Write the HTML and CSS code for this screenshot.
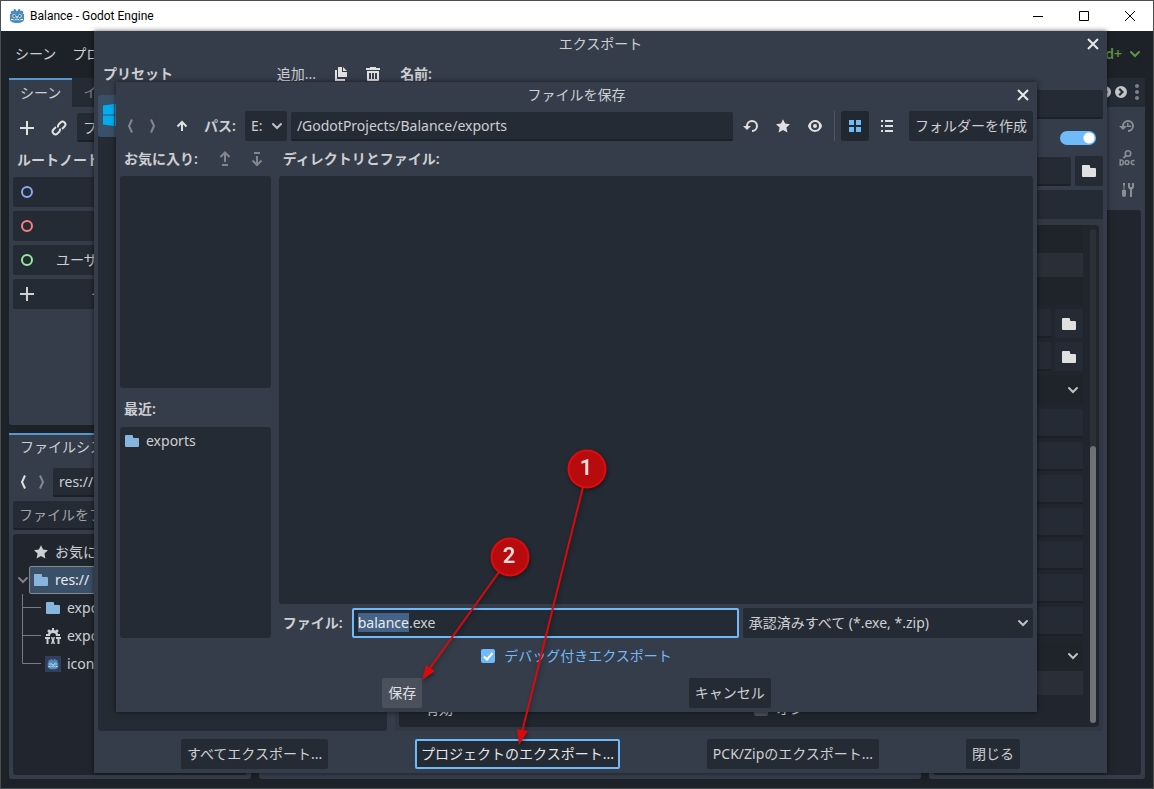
FILE: index.html
```html
<!DOCTYPE html>
<html lang="ja">

<head>
  <meta charset="UTF-8" />
  <meta name="viewport" content="width=device-width, initial-scale=1.0" />
  <title>Balance - Godot Engine</title>
  <link rel="stylesheet" href="styles.css">
</head>

<body>
  <!-- Icon set -->
  <svg class="icon-defs" aria-hidden="true">
    <symbol id="add" viewBox="0 0 16 16"><path d="M7 1v6H1v2h6v6h2V9h6V7H9V1z" /></symbol>
    <symbol id="folder" viewBox="0 0 16 16"><path d="M2 2a1 1 0 0 0-1 1v10a1 1 0 0 0 1 1h12a1 1 0 0 0 1-1V6a1 1 0 0 0-1-1h-4a1 1 0 0 1-1-1V3a1 1 0 0 0-1-1z" /></symbol>
    <symbol id="star" viewBox="0 0 16 16"><path d="M8 1.200l2.100 4.400 4.900.6-3.600 3.300 1 4.900L8 12l-4.400 2.400 1-4.900L1 6.200l4.900-.6z" /></symbol>
    <symbol id="link" viewBox="0 0 16 16"><g fill="none" stroke="currentColor" stroke-width="2" transform="rotate(-45 8 8)"><path d="M6.500 5.200H3a2.800 2.800 0 0 0 0 5.600h2.500a2.800 2.800 0 0 0 2.500-1.800" /><path d="M9.500 10.800H13a2.800 2.800 0 0 0 0-5.600h-2.500A2.800 2.800 0 0 0 8 7" /></g></symbol>
    <symbol id="ring" viewBox="0 0 16 16"><circle cx="8" cy="8" r="5" fill="none" stroke="currentColor" stroke-width="2" /></symbol>
    <symbol id="back" viewBox="0 0 16 16"><path d="M10 1.500L7 8l3 6.500" fill="none" stroke="currentColor" stroke-width="2" /></symbol>
    <symbol id="forward" viewBox="0 0 16 16"><path d="M6 1.500L9 8l-3 6.500" fill="none" stroke="currentColor" stroke-width="2" /></symbol>
    <symbol id="up" viewBox="0 0 16 16"><path d="M8 13V5M3.500 8.500L8 4l4.500 4.500" fill="none" stroke="currentColor" stroke-width="2" /></symbol>
    <symbol id="move-up" viewBox="0 0 16 16"><path d="M8 11V2M3.500 6L8 1.500 12.500 6M5 14h6" fill="none" stroke="currentColor" stroke-width="2" /></symbol>
    <symbol id="move-down" viewBox="0 0 16 16"><path d="M8 5v9M3.500 9.500L8 14l4.500-4.500M5 2h6" fill="none" stroke="currentColor" stroke-width="2" /></symbol>
    <symbol id="reload" viewBox="0 0 16 16"><path d="M9 2a6 6 0 0 0-6 6H0l4 4 4-4H5a4 4 0 1 1 4 4v2A6 6 0 0 0 9 2z" /></symbol>
    <symbol id="history" viewBox="0 0 16 16"><path d="M9 2a6 6 0 0 0-6 6H0l4 4 4-4H5a4 4 0 1 1 4 4v2A6 6 0 0 0 9 2zM8 5v4h4V7.500H9.500V5z" /></symbol>
    <symbol id="eye" viewBox="0 0 16 16"><path fill-rule="evenodd" d="M8 2C5.400 2 2.200 3.900 1 7.700v.6C2.200 12.200 5.500 14 8 14s5.800-1.800 7-5.700v-.6C13.900 3.900 10.600 2 8 2zm0 2a4 4 0 1 1 0 8 4 4 0 0 1 0-8zm0 2a2 2 0 1 0 0 4 2 2 0 0 0 0-4z" /></symbol>
    <symbol id="grid" viewBox="0 0 16 16"><path d="M2 2h5v5H2zM9 2h5v5H9zM2 9h5v5H2zM9 9h5v5H9z" /></symbol>
    <symbol id="list" viewBox="0 0 16 16"><path d="M2 2h2v2H2zM6 2h8v2H6zM2 7h2v2H2zM6 7h8v2H6zM2 12h2v2H2zM6 12h8v2H6z" /></symbol>
    <symbol id="close" viewBox="0 0 16 16"><path d="M3 3l10 10M13 3L3 13" fill="none" stroke="currentColor" stroke-width="2" /></symbol>
    <symbol id="chevron" viewBox="0 0 16 16"><path d="M4 6l4 4 4-4" fill="none" stroke="currentColor" stroke-width="2" stroke-linecap="round" /></symbol>
    <symbol id="duplicate" viewBox="0 0 16 16"><path d="M5 1v10h9V6H9V1zM10 1v4h4zM2 4v11h10v-2H4V4z" /></symbol>
    <symbol id="trash" viewBox="0 0 16 16"><path d="M5 1v1H1v2h14V2h-4V1zM2 5v9a1 1 0 0 0 1 1h10a1 1 0 0 0 1-1V5zm2 2h2v6H4zm3 0h2v6H7zm3 0h2v6h-2z" fill-rule="evenodd" /></symbol>
    <symbol id="next-circle" viewBox="0 0 16 16"><path fill-rule="evenodd" d="M8 2a6 6 0 1 0 0 12A6 6 0 0 0 8 2zM7 4l4 4-4 4-1.600-1.500L8 8 5.400 5.500z" /></symbol>
    <symbol id="dots" viewBox="0 0 16 16"><circle cx="8" cy="2" r="2" /><circle cx="8" cy="8" r="2" /><circle cx="8" cy="14" r="2" /></symbol>
    <symbol id="tools" viewBox="0 0 16 16"><path d="M4 1h2v2L5.500 4v4H7v5a2 2 0 0 1-4 0V8h1.500V4L4 3zM9 1v4a3 3 0 0 0 2 2.500V15h2V7.500A3 3 0 0 0 15 5V1h-2v4h-2V1z" /></symbol>
    <symbol id="doc" viewBox="0 0 16 16"><g fill="none" stroke="currentColor"><circle cx="9" cy="3.500" r="2.700" stroke-width="1.600" /><path d="M7 5.500L4.500 8" stroke-width="2" /><path d="M1.200 10v5h1a2 2 0 0 0 2-2.500 2 2 0 0 0-2-2.500z" stroke-width="1.500" /><circle cx="8" cy="12.500" r="1.900" stroke-width="1.500" /><path d="M15.500 10.500h-1.200a1.900 1.900 0 0 0 0 4h1.200" stroke-width="1.500" /></g></symbol>
    <symbol id="gear-txt" viewBox="0 0 16 16"><path fill-rule="evenodd" d="M7 0h2v2l1.500.6L12 1.200 13.800 3l-1.300 1.500L13 6h2v2h-4a3 3 0 0 0-6 0H1V6h2l.5-1.500L2.200 3 4 1.200l1.500 1.400L7 2z" /><path d="M0 9h5v2H3.500v5h-2v-5H0zM6 9h1.500L8 11l.5-2H10l-1 3.500 1 3.500H8.500L8 14l-.5 2H6l1-3.500zM11 9h5v2h-1.500v5h-2v-5H11z" /></symbol>
    <symbol id="godot" viewBox="0 0 16 16">
      <path d="M5 1l2 .5.3 1.500h1.400L9 1.500l2-.5.700 2.200 1.300-.7 1.500 1.500-.8 1.500 1.300.6v5.400c0 2-3 3.500-7 3.500s-7-1.500-7-3.500V6.100l1.300-.6-.8-1.500L3 2.500l1.300.7z" fill="#478cbf" />
      <circle cx="5" cy="8" r="1.700" fill="#fff" /><circle cx="11" cy="8" r="1.700" fill="#fff" />
      <circle cx="5.200" cy="8.100" r="1" fill="#414042" /><circle cx="10.800" cy="8.100" r="1" fill="#414042" />
      <path d="M7.400 8h1.200v2.200H7.400zM2 11h2.500v1.200H6V11h1.500v1.200h1V11H10v1.200h1.500V11H14v1H2z" fill="#fff" />
    </symbol>
  </svg>

  <header class="titlebar">
    <svg class="icon"><use href="#godot" /></svg>
    <span class="titlebar-text">Balance - Godot Engine</span>
    <button class="window-button" aria-label="最小化"><svg viewBox="0 0 12 12"><path d="M1 6.500h10" /></svg></button>
    <button class="window-button" aria-label="最大化"><svg viewBox="0 0 12 12"><path d="M1.500 1.500h9v9h-9z" /></svg></button>
    <button class="window-button" aria-label="終了"><svg viewBox="0 0 12 12"><path d="M1 1l10 10M11 1L1 11" /></svg></button>
  </header>

  <main class="editor">
    <nav class="menubar">
      <button class="menu">シーン</button>
      <button class="menu">プロ</button>
      <button class="renderer">d+ <svg class="icon"><use href="#chevron" /></svg></button>
    </nav>

    <div class="docks">
      <div class="dock-column">
        <!-- Scene dock -->
        <section class="dock scene-dock">
          <div class="tabs">
            <button class="tab active">シーン</button>
            <button class="tab">イ</button>
          </div>
          <div class="dock-body">
            <div class="row">
              <button class="tool" aria-label="追加"><svg class="icon"><use href="#add" /></svg></button>
              <button class="tool" aria-label="リンク"><svg class="icon"><use href="#link" /></svg></button>
              <input class="field grow" type="text" aria-label="フィルター" value="フ">
            </div>
            <h2 class="label root-label">ルートノード</h2>
            <button class="node-button"><svg class="icon node-2d"><use href="#ring" /></svg></button>
            <button class="node-button"><svg class="icon node-3d"><use href="#ring" /></svg></button>
            <button class="node-button"><svg class="icon node-ui"><use href="#ring" /></svg><span>ユーザ</span></button>
            <button class="node-button other"><svg class="icon"><use href="#add" /></svg><span>そ</span></button>
          </div>
        </section>

        <!-- FileSystem dock -->
        <section class="dock files-dock">
          <div class="tabs">
            <button class="tab active wide">ファイルシス</button>
          </div>
          <div class="dock-body">
            <div class="row nav-row">
              <button class="step" aria-label="戻る"><svg class="icon"><use href="#back" /></svg></button>
              <button class="step dim" aria-label="進む"><svg class="icon"><use href="#forward" /></svg></button>
              <input class="field grow" type="text" aria-label="パス" value="res://">
            </div>
            <input class="field filter" type="text" aria-label="検索" placeholder="ファイルをフ">
            <ul class="tree">
              <li class="tree-row"><svg class="icon indent"><use href="#star" /></svg>お気に</li>
              <li class="tree-row open">
                <svg class="icon arrow"><use href="#chevron" /></svg>
                <span class="selected"><svg class="icon blue"><use href="#folder" /></svg>res://</span>
              </li>
              <li class="tree-row child"><svg class="branch" viewBox="0 0 20 28"><path d="M.5 0v28M.5 13.500H19" /></svg><svg class="icon blue"><use href="#folder" /></svg>expo</li>
              <li class="tree-row child"><svg class="branch" viewBox="0 0 20 28"><path d="M.5 0v28M.5 13.500H19" /></svg><svg class="icon"><use href="#gear-txt" /></svg>expo</li>
              <li class="tree-row child"><svg class="branch" viewBox="0 0 20 28"><path d="M.5 0v13.500H19" /></svg><span class="thumb"><svg class="icon"><use href="#godot" /></svg></span>icon</li>
            </ul>
          </div>
        </section>
      </div>

      <section class="dock center-dock"></section>

      <!-- Inspector dock -->
      <section class="dock inspector-dock">
        <div class="inspector-tabs">
          <svg class="icon"><use href="#next-circle" /></svg>
          <svg class="icon"><use href="#next-circle" /></svg>
          <svg class="icon dots"><use href="#dots" /></svg>
        </div>
        <div class="inspector-tools">
          <button aria-label="履歴"><svg class="icon"><use href="#history" /></svg></button>
          <button aria-label="ドキュメント"><svg class="icon"><use href="#doc" /></svg></button>
          <button aria-label="ツール"><svg class="icon"><use href="#tools" /></svg></button>
        </div>
        <div class="inspector-list"></div>
      </section>
    </div>

    <!-- Export dialog -->
    <section class="dialog export-dialog">
      <header class="dialog-title">
        <h1>エクスポート</h1>
        <button class="close" aria-label="閉じる"><svg class="icon"><use href="#close" /></svg></button>
      </header>
      <div class="export-body">
        <div class="presets">
          <div class="row preset-head">
            <h2 class="label grow">プリセット</h2>
            <button class="flat">追加...</button>
            <button class="tool" aria-label="複製"><svg class="icon"><use href="#duplicate" /></svg></button>
            <button class="tool" aria-label="削除"><svg class="icon"><use href="#trash" /></svg></button>
          </div>
          <div class="panel preset-list">
            <div class="preset"><svg viewBox="0 0 24 24"><path d="M0 2.500L11 1v10.500H0zM12 .8L24 0v11.500H12zM0 12.500h11V23L0 21.500zM12 12.500h12V24l-12-1z" /></svg></div>
          </div>
        </div>
        <div class="options">
          <label class="label name-label" for="preset-name">名前:</label>
          <input class="field" id="preset-name" type="text">
          <div class="toggle-row"><input class="toggle" type="checkbox" aria-label="実行可能" checked></div>
          <div class="row">
            <input class="field grow" type="text" aria-label="エクスポート先のパス">
            <button class="button square" aria-label="参照"><svg class="icon"><use href="#folder" /></svg></button>
          </div>
          <div class="option-tabs"></div>
          <div class="option-frame">
            <div class="option-scroll">
              <div class="properties">
                <div class="group"></div>
                <div class="section"></div>
                <div class="group"></div>
                <div class="row"><input class="field grow" type="text" aria-label="デバッグ"><button class="button square" aria-label="開く"><svg class="icon"><use href="#folder" /></svg></button></div>
                <div class="row"><input class="field grow" type="text" aria-label="リリース"><button class="button square" aria-label="開く"><svg class="icon"><use href="#folder" /></svg></button></div>
                <select class="select dark" aria-label="ラッパー"></select>
                <input class="field" type="text" aria-label="項目 1">
                <input class="field" type="text" aria-label="項目 2">
                <input class="field" type="text" aria-label="項目 3">
                <input class="field" type="text" aria-label="項目 4">
                <input class="field" type="text" aria-label="項目 5">
                <input class="field" type="text" aria-label="項目 6">
                <input class="field" type="text" aria-label="項目 7">
                <select class="select dark last" aria-label="アーキテクチャ"></select>
                <div class="section"></div>
                <div class="enabled-row">
                  <span>有効</span>
                  <label><input class="check off" type="checkbox">オン</label>
                </div>
              </div>
              <div class="scrollbar"><div class="track"><div class="grabber"></div></div></div>
            </div>
          </div>
        </div>
      </div>
      <footer class="dialog-actions">
        <button class="button">すべてエクスポート...</button>
        <button class="button focused">プロジェクトのエクスポート...</button>
        <button class="button">PCK/Zipのエクスポート...</button>
        <button class="button">閉じる</button>
      </footer>
    </section>

    <!-- Save dialog -->
    <section class="dialog save-dialog">
      <header class="dialog-title">
        <h1>ファイルを保存</h1>
        <button class="close" aria-label="閉じる"><svg class="icon"><use href="#close" /></svg></button>
      </header>
      <div class="save-toolbar">
        <button class="step dim" aria-label="戻る"><svg class="icon"><use href="#back" /></svg></button>
        <button class="step dim" aria-label="進む"><svg class="icon"><use href="#forward" /></svg></button>
        <button class="tool" aria-label="上へ"><svg class="icon"><use href="#up" /></svg></button>
        <label class="label path-label" for="path">パス:</label>
        <select class="select drive" aria-label="ドライブ"><option>E:</option></select>
        <input class="field grow" id="path" type="text" value="/GodotProjects/Balance/exports">
        <button class="tool" aria-label="更新"><svg class="icon"><use href="#reload" /></svg></button>
        <button class="tool" aria-label="お気に入り"><svg class="icon"><use href="#star" /></svg></button>
        <button class="tool" aria-label="隠しファイル"><svg class="icon"><use href="#eye" /></svg></button>
        <span class="separator"></span>
        <button class="button square pressed" aria-label="サムネイル"><svg class="icon"><use href="#grid" /></svg></button>
        <button class="tool" aria-label="リスト"><svg class="icon"><use href="#list" /></svg></button>
        <button class="button create">フォルダーを作成</button>
      </div>
      <div class="save-body">
        <aside class="places">
          <div class="list-head">
            <h2 class="label grow">お気に入り:</h2>
            <button class="tool dim" aria-label="上に移動"><svg class="icon"><use href="#move-up" /></svg></button>
            <button class="tool dim" aria-label="下に移動"><svg class="icon"><use href="#move-down" /></svg></button>
          </div>
          <div class="panel"></div>
          <div class="list-head recent"><h2 class="label">最近:</h2></div>
          <ul class="panel">
            <li><svg class="icon blue"><use href="#folder" /></svg>exports</li>
          </ul>
        </aside>
        <div class="files">
          <div class="list-head"><h2 class="label">ディレクトリとファイル:</h2></div>
          <div class="panel"></div>
          <div class="file-row">
            <label class="label" for="file-name">ファイル:</label>
            <input class="field focused" id="file-name" type="text" value="balance.exe">
            <select class="select" aria-label="ファイルの種類"><option>承認済みすべて (*.exe, *.zip)</option></select>
          </div>
        </div>
      </div>
      <label class="debug-row"><input class="check" type="checkbox" checked>デバッグ付きエクスポート</label>
      <footer class="dialog-actions">
        <button class="button hover">保存</button>
        <button class="button">キャンセル</button>
      </footer>
    </section>
  </main>

  <!-- Numbered steps -->
  <svg class="callouts" viewBox="0 0 1154 789">
    <g class="callout-line">
      <path d="M583 487L522 732" />
      <path d="M499 572L430 668" />
    </g>
    <path class="callout-head" d="M517 729l11 2-9 14zM426 665l9 6-13 9z" />
    <circle cx="587" cy="469" r="18.500" />
    <circle cx="510" cy="557" r="18.500" />
    <text x="586" y="475">1</text>
    <text x="509" y="563">2</text>
  </svg>

  <script>
    const fileName = document.getElementById("file-name");
    fileName.focus();
    // select the base name, leave the extension
    fileName.setSelectionRange(0, fileName.value.lastIndexOf("."));
  </script>
</body>

</html>
```
FILE: styles.css
```css
* {
  box-sizing: border-box;
}

body {
  display: flex;
  flex-direction: column;
  height: 100vh;
  margin: 0;
  padding: 1px;
  overflow: hidden;
  position: relative;
  background-color: #4b4d4f;
  color: #cdcfd2;
  font-family: "Noto Sans", "Noto Sans CJK JP", sans-serif;
  font-size: 14px;
  line-height: 20px;
}

h1,
h2,
ul {
  margin: 0;
  padding: 0;
  font-size: 14px;
  font-weight: normal;
  list-style: none;
}

button,
input,
select {
  margin: 0;
  padding: 0;
  border: none;
  border-radius: 0;
  background: none;
  color: inherit;
  font: inherit;
  outline: none;
}

.icon-defs {
  display: none;
}

.icon {
  flex: none;
  display: block;
  width: 16px;
  height: 16px;
  fill: currentColor;
}

.blue {
  color: #87b5de;
}

.dim {
  opacity: 0.45;
}

.grow {
  flex: 1;
  min-width: 0;
}

.row {
  display: flex;
  align-items: center;
  gap: 4px;
}

.label {
  font-weight: 600;
}

/* Window title bar */
.titlebar {
  flex: none;
  display: flex;
  align-items: center;
  height: 30px;
  padding-left: 8px;
  background-color: #fff;
  color: #000;
}

.titlebar-text {
  flex: 1;
  padding-left: 5px;
  font-family: Roboto, sans-serif;
  font-size: 12px;
}

.window-button {
  display: flex;
  align-items: center;
  justify-content: center;
  width: 46px;
  height: 30px;
}

.window-button svg {
  width: 12px;
  height: 12px;
  fill: none;
  stroke: #000;
}

/* Shared controls */
.field {
  height: 29px;
  padding: 0 6px;
  border-bottom: 2px solid #1c2027;
  border-radius: 2px;
  background-color: #252b34;
}

.field::placeholder {
  color: #a0a3a8;
  opacity: 1;
}

.field.focused {
  border: 2px solid #70bafa;
  padding: 0 4px 2px;
}

.field::selection {
  background-color: #456386;
  color: #e8ebee;
}

.button {
  height: 30px;
  padding: 0 6px;
  border-radius: 2px;
  background-color: #252b34;
  white-space: nowrap;
}

.button.focused {
  padding: 0 4px;
  border: 2px solid #70bafa;
  color: #e4e6e8;
}

.button.hover {
  background-color: #4b515c;
  color: #dfe1e3;
}

.button.square,
.tool,
.step {
  flex: none;
  display: flex;
  align-items: center;
  justify-content: center;
  width: 28px;
  padding: 0;
  color: #e0e0e0;
}

.step {
  width: 16px;
}

.tool {
  height: 28px;
}

.button.pressed {
  background-color: #212830;
  color: #70bafa;
}

.select {
  height: 30px;
  padding: 0 24px 0 6px;
  border-radius: 2px;
  appearance: none;
  background: #252b34 url("data:image/svg+xml,%3Csvg xmlns='http://www.w3.org/2000/svg' width='16' height='16'%3E%3Cpath d='M4 6l4 4 4-4' fill='none' stroke='%23bfc1c4' stroke-width='2' stroke-linecap='round'/%3E%3C/svg%3E") no-repeat right 2px center;
}

.select.dark {
  background-color: #1f242b;
}

.check {
  flex: none;
  width: 14px;
  height: 14px;
  border-radius: 2px;
  appearance: none;
  background: #70bafa url("data:image/svg+xml,%3Csvg xmlns='http://www.w3.org/2000/svg' width='14' height='14'%3E%3Cpath d='M3 7.500l3 3L11.500 4' fill='none' stroke='%23fff' stroke-width='2'/%3E%3C/svg%3E") no-repeat center;
}

.check.off {
  background: #4a4d54;
}

.panel {
  border-radius: 3px;
  background-color: #252b34;
}

/* Editor */
.editor {
  flex: 1;
  display: flex;
  flex-direction: column;
  min-height: 0;
  position: relative;
  background-color: #1d2229;
}

.menubar {
  display: flex;
  align-items: center;
  gap: 16px;
  height: 47px;
  padding: 0 10px 2px 14px;
}

.renderer {
  display: flex;
  align-items: center;
  gap: 5px;
  margin-left: auto;
  color: #5d9642;
  font-weight: 600;
}

.docks {
  flex: 1;
  display: flex;
  gap: 8px;
  min-height: 0;
  padding: 0 8px 9px;
}

.dock-column {
  display: flex;
  flex-direction: column;
  gap: 8px;
  width: 242px;
}

.dock {
  display: flex;
  flex-direction: column;
  border-radius: 3px;
  background-color: #363d4a;
}

.scene-dock,
.files-dock {
  flex: 1;
  min-height: 0;
}

.center-dock {
  flex: 1;
}

.tabs {
  display: flex;
  height: 29px;
  background-color: #252b34;
}

.tab {
  padding: 0 11px 2px;
  color: #7d8188;
}

.tab.active {
  border-top: 2px solid #5797cf;
  background-color: #363d4a;
  color: #cdcfd2;
}

.tab.wide {
  width: 100%;
  text-align: left;
}

.dock-body {
  flex: 1;
  display: flex;
  flex-direction: column;
  gap: 4px;
  min-height: 0;
  padding: 6px 4px 4px;
}

.root-label {
  height: 27px;
  padding: 4px;
}

.node-button {
  flex: none;
  display: flex;
  align-items: center;
  gap: 21px;
  height: 30px;
  padding: 0 6px;
  border-radius: 2px;
  background-color: #252b34;
  color: #cdcfd2;
}

.node-button.other {
  gap: 56px;
}

.node-2d {
  color: #8da5f3;
}

.node-3d {
  color: #fc7f7f;
}

.node-ui {
  color: #8eef97;
}

.nav-row {
  gap: 3px;
  padding-left: 2px;
}

.filter {
  flex: none;
}

.tree {
  flex: 1;
  padding-top: 4px;
  border-radius: 3px;
  background-color: #21262e;
}

.tree-row {
  display: flex;
  align-items: center;
  gap: 6px;
  height: 28px;
}

.indent {
  margin-left: 20px;
}

.tree-row.open {
  gap: 0;
  padding-left: 2px;
}

.arrow {
  margin-right: -2px;
  color: #7d8188;
}

.selected {
  flex: 1;
  display: flex;
  align-items: center;
  gap: 6px;
  height: 28px;
  padding-left: 3px;
  border: 1px solid #84888f;
  border-radius: 2px;
  background-color: #3a5068;
  color: #e8ebee;
}

.tree-row.child {
  padding-left: 9px;
}

.branch {
  width: 20px;
  height: 28px;
  margin-right: -3px;
  fill: none;
  stroke: #787c82;
}

.thumb {
  padding: 2px;
  background-color: #363d5b;
}

.thumb .icon {
  width: 12px;
  height: 12px;
}

/* Inspector dock */
.inspector-dock {
  width: 19%;
}

.inspector-tabs {
  display: flex;
  align-items: center;
  justify-content: flex-end;
  height: 29px;
  padding-bottom: 2px;
  border-radius: 3px 3px 0 0;
  background-color: #252b34;
  color: #c3c5c7;
}

.dots {
  color: #7d8188;
}

.inspector-tools {
  display: flex;
  flex-direction: column;
  align-items: flex-end;
  gap: 16px;
  padding: 11px 10px 12px;
  color: #8a8e95;
}

.inspector-list {
  flex: 1;
  margin: 0 4px 4px;
  border-radius: 3px;
  background-color: #21262e;
}

/* Dialogs */
.dialog {
  display: flex;
  flex-direction: column;
  position: absolute;
  background-color: #363d4a;
  box-shadow: 0 0 5px rgba(0, 0, 0, 0.6);
}

.dialog-title {
  flex: none;
  display: flex;
  align-items: center;
  height: 26px;
  padding: 0 6px 0 22px;
}

.dialog-title h1 {
  flex: 1;
  text-align: center;
}

.close {
  color: #e8e9ea;
}

.dialog-actions {
  display: flex;
  justify-content: space-evenly;
  padding: 8px 0 4px;
}

/* Export dialog */
.export-dialog {
  top: 0;
  right: 46px;
  bottom: 15px;
  left: 93px;
}

.export-body {
  flex: 1;
  display: flex;
  gap: 8px;
  min-height: 0;
  padding: 2px 4px 0;
}

.presets {
  flex: 29;
  display: flex;
  flex-direction: column;
}

.preset-head {
  height: 30px;
  padding: 0 0 0 5px;
}

.flat {
  padding: 0 7px;
}

.preset-list {
  flex: 1;
  margin-top: 6px;
}

.preset {
  height: 42px;
  padding: 8px 5px;
  border-radius: 3px;
  background-color: #3a5068;
}

.preset svg {
  display: block;
  width: 24px;
  height: 24px;
  fill: #00adef;
}

.options {
  flex: 71;
  display: flex;
  flex-direction: column;
  min-width: 0;
}

.name-label {
  height: 31px;
  padding: 5px;
}

.toggle-row {
  display: flex;
  align-items: center;
  justify-content: flex-end;
  height: 37px;
  padding-right: 7px;
}

.toggle {
  width: 36px;
  height: 14px;
  border-radius: 7px;
  appearance: none;
  background: #70bafa radial-gradient(circle at 29px 7px, #fff 5px, transparent 6px);
}

.option-tabs {
  height: 29px;
  margin-top: 4px;
  border-radius: 2px 2px 0 0;
  background-color: #252b34;
}

.option-frame {
  flex: 1;
  display: flex;
  min-height: 0;
  padding: 6px 4px 4px;
  background-color: #323843;
}

.option-scroll {
  flex: 1;
  display: flex;
  min-width: 0;
  border-radius: 3px;
  background-color: #21262e;
}

.properties {
  flex: 1;
  display: flex;
  flex-direction: column;
  gap: 4px;
  min-width: 0;
  overflow: hidden;
}

.properties > * {
  flex: none;
}

.properties .square {
  height: 29px;
}

.group {
  height: 28px;
  margin-bottom: -4px;
  background-color: #1f242b;
}

.section {
  height: 24px;
  margin-bottom: -4px;
  background-color: #2a2f37;
}

.group + .row {
  margin-top: 4px;
}

.select.last {
  margin-top: 1px;
  margin-bottom: -4px;
}

.enabled-row {
  display: flex;
  align-items: center;
  height: 28px;
  padding-left: 26px;
}

.enabled-row span {
  flex: 1;
}

.enabled-row label {
  flex: 1;
  display: flex;
  align-items: center;
  gap: 8px;
}

.scrollbar {
  display: flex;
  width: 16px;
  padding: 4px 3px 4px 7px;
}

.track {
  flex: 1;
  display: flex;
  align-items: flex-end;
  border-radius: 3px;
  background-color: #2b3037;
}

.grabber {
  width: 6px;
  height: 56%;
  border-radius: 3px;
  background-color: #6e7176;
}

/* Save dialog */
.save-dialog {
  top: 51px;
  right: 116px;
  bottom: 76px;
  left: 115px;
}

.save-toolbar {
  display: flex;
  align-items: center;
  gap: 4px;
  height: 30px;
  margin-top: 3px;
  padding: 0 4px 0 6px;
}

.save-toolbar .step {
  margin-right: 3px;
}

.path-label {
  padding: 0 5px 0 4px;
}

.separator {
  width: 1px;
  height: 30px;
  margin: 0 2px 0 1px;
  background-color: #50565f;
}

.create {
  margin-left: 4px;
}

.save-body {
  flex: 1;
  display: flex;
  gap: 8px;
  min-height: 0;
  padding: 0 4px;
}

.places,
.files {
  display: flex;
  flex-direction: column;
}

.places {
  flex: 1;
}

.files {
  flex: 5;
}

.places .panel,
.files .panel {
  flex: 1;
}

.list-head {
  flex: none;
  display: flex;
  align-items: center;
  gap: 4px;
  height: 35px;
  padding-left: 4px;
}

.list-head.recent {
  height: 39px;
  padding-top: 4px;
}

.places li {
  display: flex;
  align-items: center;
  gap: 6px;
  padding: 4px;
}

.file-row {
  display: grid;
  grid-template-columns: auto 4fr 3fr;
  align-items: center;
  gap: 4px;
  margin-top: 4px;
}

.file-row .label {
  padding: 0 5px 0 4px;
}

.file-row .field {
  height: 30px;
  min-width: 0;
}

.file-row .select {
  min-width: 0;
}

.debug-row {
  display: flex;
  align-items: center;
  justify-content: center;
  gap: 9px;
  height: 36px;
  color: #70bafa;
}

.save-dialog .dialog-actions {
  padding-top: 4px;
}

/* Numbered steps drawn over the window */
.callouts {
  position: absolute;
  top: 0;
  left: 0;
  width: 100%;
  height: 100%;
  pointer-events: none;
  filter: drop-shadow(1px 2px 2px rgba(0, 0, 0, 0.4));
}

.callouts circle {
  fill: #b80b0e;
  stroke: #e00a0f;
  stroke-width: 2;
}

.callouts text {
  fill: #f3dcdc;
  font-family: Roboto, sans-serif;
  font-size: 22px;
  font-weight: 600;
  text-anchor: middle;
}

.callout-line {
  fill: none;
  stroke: #d90a0e;
  stroke-width: 2;
}

.callout-head {
  fill: #d90a0e;
}
```
